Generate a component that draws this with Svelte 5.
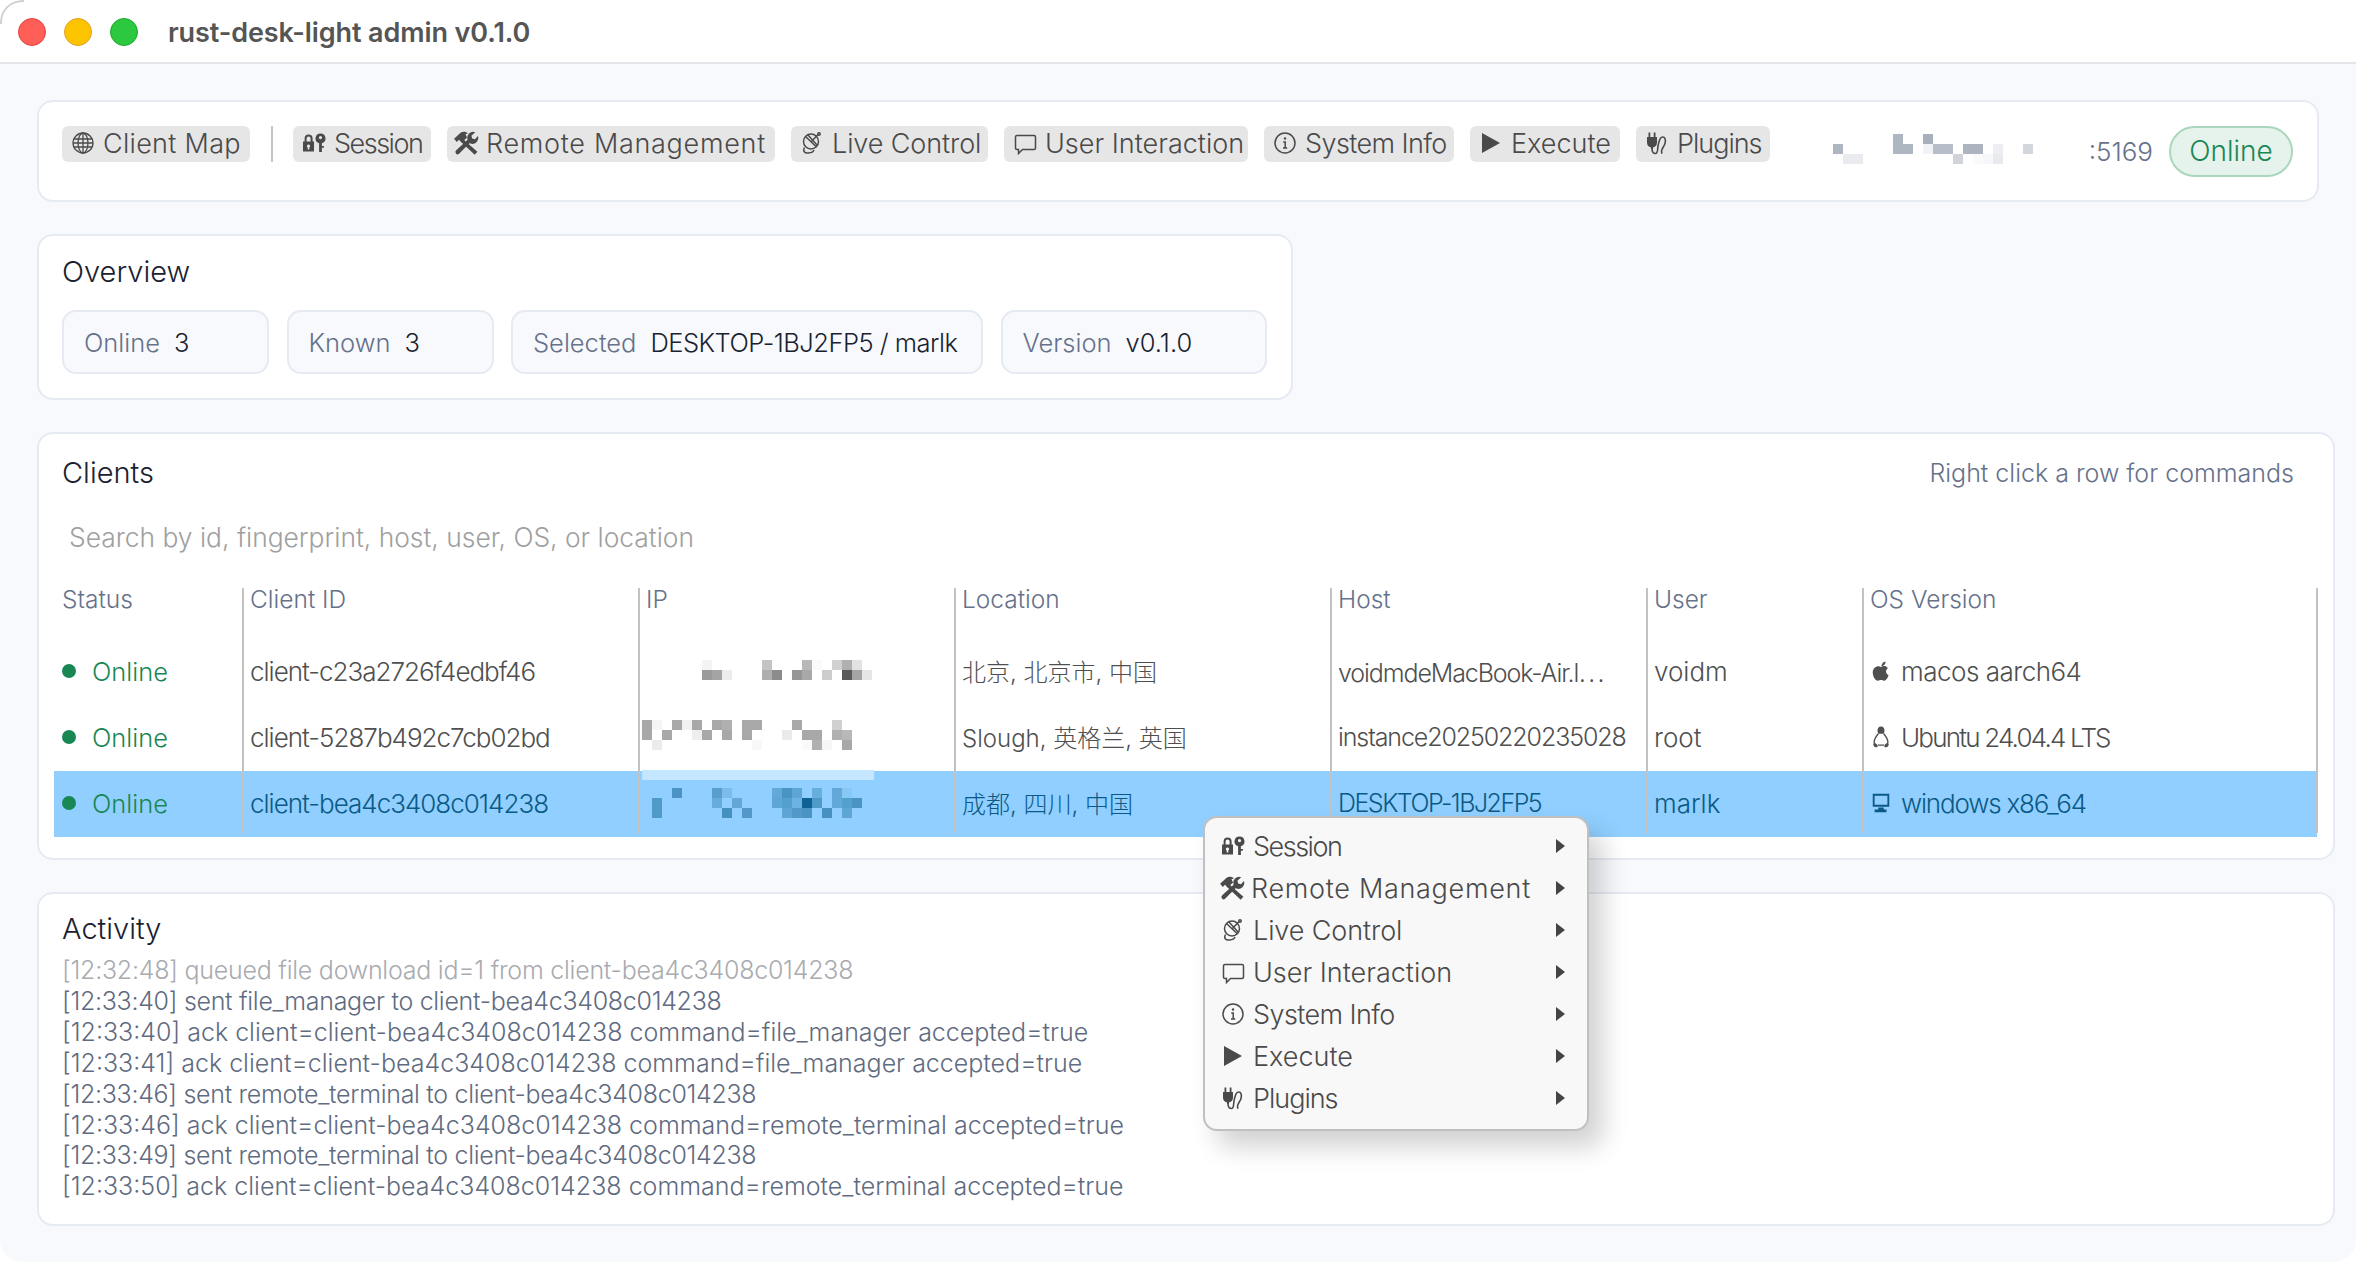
<script>
  const tools = [
    { icon: 'session', label: 'Session' },
    { icon: 'tools', label: 'Remote Management' },
    { icon: 'dish', label: 'Live Control' },
    { icon: 'chat', label: 'User Interaction' },
    { icon: 'info', label: 'System Info' },
    { icon: 'play', label: 'Execute' },
    { icon: 'plug', label: 'Plugins' }
  ];

  const stats = [
    { label: 'Online', value: '3', size: 'sm' },
    { label: 'Known', value: '3', size: 'sm' },
    { label: 'Selected', value: 'DESKTOP-1BJ2FP5 / marlk', size: 'lg' },
    { label: 'Version', value: 'v0.1.0', size: 'md' }
  ];

  const columns = ['Status', 'Client ID', 'IP', 'Location', 'Host', 'User', 'OS Version'];

  // redacted values in the screenshot: [col, y, colour], one block is 10px
  const grey1 = [
    [6, 21, '#f4f4f4'], [12, 21, '#c4c4c4'], [16, 21, '#b8b8b8'], [17, 21, '#fafafa'], [19, 21, '#d0d0d0'], [20, 21, '#b0b0b0'], [21, 21, '#e2e2e2'],
    [6, 31, '#9a9a9a'], [7, 31, '#a4a4a4'], [8, 31, '#ececec'], [12, 31, '#aeaeae'], [13, 31, '#8c8c8c'], [15, 31, '#969696'], [16, 31, '#a8a8a8'], [18, 31, '#cccccc'], [20, 31, '#5a5a5a'], [21, 31, '#a4a4a4'], [22, 31, '#e6e6e6']
  ];
  const grey2 = [
    [0, 15, '#a8a8a8'], [1, 15, '#f4f4f4'], [3, 15, '#a8a8a8'], [4, 15, '#f2f2f2'], [5, 15, '#a8a8a8'], [7, 15, '#a8a8a8'], [8, 15, '#b0b0b0'], [10, 15, '#a8a8a8'], [11, 15, '#a8a8a8'], [15, 15, '#a8a8a8'], [19, 15, '#d0d0d0'],
    [0, 25, '#a8a8a8'], [2, 25, '#a8a8a8'], [5, 25, '#eeeeee'], [6, 25, '#a8a8a8'], [8, 25, '#a8a8a8'], [10, 25, '#a8a8a8'], [14, 25, '#eaeaea'], [16, 25, '#a8a8a8'], [17, 25, '#a8a8a8'], [19, 25, '#b0b0b0'], [20, 25, '#b8b8b8'],
    [1, 35, '#ebebeb'], [11, 35, '#f8f8f8'], [16, 35, '#fafafa'], [17, 35, '#b0b0b0'], [18, 35, '#f6f6f6'], [20, 35, '#a8a8a8']
  ];
  const blue = [
    [3, 19, '#4a93c4'], [7, 19, '#5a9ecd'], [8, 19, '#7cbcea'], [13, 19, '#62a8d8'], [14, 19, '#4a94c4'], [15, 19, '#5ea6d6'], [17, 19, '#68aedd'], [19, 19, '#62a8d8'], [20, 19, '#88c8f4'],
    [1, 29, '#4f9ac8'], [7, 29, '#66acdc'], [9, 29, '#62a8d8'], [13, 29, '#5ea6d6'], [14, 29, '#52a0d0'], [15, 29, '#6cb2e2'], [16, 29, '#0f6394'], [17, 29, '#4f9ac8'], [19, 29, '#62a8d8'], [20, 29, '#52a0d0'], [21, 29, '#4a94c4'],
    [1, 39, '#4f9ac8'], [8, 39, '#4490c0'], [10, 39, '#5298c8'], [14, 39, '#5ea4d4'], [15, 39, '#5298c8'], [16, 39, '#4a94c4'], [18, 39, '#4890c0'], [20, 39, '#5ea6d6']
  ];
  const address = [
    [6, 0, '#aeb6c2'], [9, 0, '#a8b0bc'],
    [0, 10, '#aeb6c2'], [6, 10, '#aeb6c2'], [7, 10, '#aeb6c2'], [9, 10, '#f2f3f6'], [10, 10, '#b8bec9'], [11, 10, '#b8bec9'], [13, 10, '#acb4c0'], [14, 10, '#acb4c0'], [16, 10, '#eceef1'], [19, 10, '#d3d7dd'],
    [1, 20, '#e9ebef'], [2, 20, '#e9ebef'], [12, 20, '#d0d4da'], [14, 20, '#fafafb'], [15, 20, '#f6f7f9'], [16, 20, '#e8eaee']
  ];

  const clients = [
    { id: 'client-c23a2726f4edbf46', ip: grey1, location: '北京, 北京市, 中国', host: 'voidmdeMacBook-Air.l⋯', user: 'voidm', os: 'macos aarch64', osIcon: 'apple' },
    { id: 'client-5287b492c7cb02bd', ip: grey2, location: 'Slough, 英格兰, 英国', host: 'instance20250220235028', user: 'root', os: 'Ubuntu 24.04.4 LTS', osIcon: 'linux' },
    { id: 'client-bea4c3408c014238', ip: blue, location: '成都, 四川, 中国', host: 'DESKTOP-1BJ2FP5', user: 'marlk', os: 'windows x86_64', osIcon: 'monitor', selected: true }
  ];

  const logs = [
    '[12:32:48] queued file download id=1 from client-bea4c3408c014238',
    '[12:33:40] sent file_manager to client-bea4c3408c014238',
    '[12:33:40] ack client=client-bea4c3408c014238 command=file_manager accepted=true',
    '[12:33:41] ack client=client-bea4c3408c014238 command=file_manager accepted=true',
    '[12:33:46] sent remote_terminal to client-bea4c3408c014238',
    '[12:33:46] ack client=client-bea4c3408c014238 command=remote_terminal accepted=true',
    '[12:33:49] sent remote_terminal to client-bea4c3408c014238',
    '[12:33:50] ack client=client-bea4c3408c014238 command=remote_terminal accepted=true'
  ];
</script>

{#snippet icon(name)}
  <svg class="icon" viewBox="0 0 24 24" aria-hidden="true">
    {#if name === 'globe'}
      <g class="line" stroke-width="1.3">
        <circle cx="12" cy="12" r="10" />
        <ellipse cx="12" cy="12" rx="5" ry="10" />
        <path d="M12 2v20M2.8 8h18.4M2 12h20M2.8 16h18.4" />
      </g>
    {:else if name === 'session'}
      <path class="solid" d="M1 10.5h1.6V7.5a4 4 0 0 1 8 0v3h1.4v10H1zM4.6 10.5h4V7.5a2 2 0 0 0-4 0zM6.5 13.5a1.6 1.6 0 0 0-.8 3v2h1.6v-2a1.6 1.6 0 0 0-.8-3z" fill-rule="evenodd" />
      <path class="solid" d="M18.5 2.5a5 5 0 0 1 1.4 9.8V15h2v1.8h-2V21h-2.8v-8.7a5 5 0 0 1 1.4-9.8zM18.5 5a1.6 1.6 0 1 0 0 3.2 1.6 1.6 0 0 0 0-3.2z" fill-rule="evenodd" />
    {:else if name === 'tools'}
      <path class="solid" d="M9 8 22.500 20 20 22.800 7 10.500z" />
      <path class="solid" d="M1 8 7 2.500C9 1 12 1.500 14 3L11.500 4 13 7 8 11.500 5.500 9 3.500 11z" />
      <path class="solid" d="M3 18.800 14 8.500 16.500 11 5.600 22a1.800 1.800 0 0 1-2.600-3.200z" />
      <path class="solid" d="M13.500 9a5.500 5.500 0 0 1 7-7l-3.500 3.200.7 2.600 2.600.7L23 5.500a5.500 5.500 0 0 1-7 7z" />
    {:else if name === 'dish'}
      <g class="line" stroke-width="1.5">
        <circle cx="11" cy="10.5" r="7.5" />
        <path d="M5.5 5.5 16.5 16M11 11l7-7.5M8 4l9 10M4.5 16.5c-2 3.5 0 6 4 5.5 3-.3 5-1.5 5.5-3" />
        <circle cx="19" cy="3" r="1.2" />
      </g>
    {:else if name === 'chat'}
      <path class="line" stroke-width="1.5" d="M4 4.5h17a1.5 1.5 0 0 1 1.5 1.5v11a1.5 1.5 0 0 1-1.5 1.5H9.5L5.5 22.5v-4H4A1.5 1.5 0 0 1 2.500 17V6A1.500 1.500 0 0 1 4 4.500z" />
    {:else if name === 'info'}
      <g class="line" stroke-width="1.5">
        <circle cx="12" cy="12" r="10" />
        <path d="M10.200 11h2v6M10 17h4.200" />
      </g>
      <circle class="solid" cx="12" cy="7.500" r="1.200" />
    {:else if name === 'play'}
      <path class="solid" d="M3 2 21 12 3 22z" />
    {:else if name === 'plug'}
      <path class="solid" d="M3.500 1.500h1.800V6h3.400V1.500h1.800V6H12v5.500a5 5 0 0 1-4 4.900V18H6v-1.600a5 5 0 0 1-4-4.900V6h1.500z" />
      <path class="line" stroke-width="1.600" d="M7 17.500c0 3 1.500 5 3.500 5 3 0 1.500-5 3-10 .8-3 1.500-6.500 4-6.500 2.700 0 3.500 3 2.500 6.500-.8 3-3.500 5-3.500 8 0 1 .3 1.700.8 2" />
    {:else if name === 'apple'}
      <path class="solid" d="M12 7.500c2-1.300 6-1.300 7.500 1.500-3 2-2.500 6 .8 7.500-1 3-3 6-5 6-1.300 0-2-.8-3.300-.8s-2 .8-3.300.8C5.500 22.500 3 17.500 3 13.500 3 9 7.500 5.500 12 7.500zM12.500 6.500c0-2.500 2-4.500 4.500-5 .2 2.500-2 5-4.500 5z" />
    {:else if name === 'linux'}
      <path class="solid" d="M12 .5c-2.700 0-3.800 2-3.800 4.500 0 1.500.4 2.500.8 3.500h6c.4-1 .8-2 .8-3.500C15.800 2.500 14.700.5 12 .5z" />
      <g class="line" stroke-width="1.500">
        <path d="M9 8.500C7 11 4.500 14 4.500 17.500c0 1.200.3 2 .8 2.500M15 8.500c2 2.500 4.500 5.500 4.500 9 0 1.200-.3 2-.8 2.500M8.500 20.800h7" />
      </g>
      <path class="solid" d="M3.500 20c1.500-2 4-1.500 5 2.500-2 1-4.500 1-5-2.500zM20.500 20c-1.500-2-4-1.500-5 2.500 2 1 4.500 1 5-2.500z" />
    {:else if name === 'monitor'}
      <path class="solid" d="M3 2h18v14H3zM5 4v10h14V4zM9 17h6v2h3v3H5v-3h4z" fill-rule="evenodd" />
    {/if}
  </svg>
{/snippet}

{#snippet mosaic(blocks, width)}
  <svg class="mosaic" {width} height="50" viewBox="0 0 {width} 50">
    {#each blocks as [col, y, fill]}
      <rect x={col * 10} {y} width="10" height="10" {fill} />
    {/each}
  </svg>
{/snippet}

<div class="window">
  <header class="titlebar">
    <span class="light red"></span>
    <span class="light yellow"></span>
    <span class="light green"></span>
    <h1>rust-desk-light admin v0.1.0</h1>
  </header>

  <main class="content">
    <section class="card toolbar">
      <button class="tool map">{@render icon('globe')} <span class="label">Client Map</span></button>
      <span class="divider"></span>
      {#each tools as tool}
        <button class="tool {tool.icon}">{@render icon(tool.icon)} <span class="label">{tool.label}</span></button>
      {/each}
      <div class="server">
        {@render mosaic(address, 250)}
        <span class="port">:5169</span>
        <span class="pill">Online</span>
      </div>
    </section>

    <section class="card overview">
      <h2>Overview</h2>
      <div class="stats">
        {#each stats as stat}
          <div class="stat {stat.size}">
            <span class="stat-label">{stat.label}</span>
            <span class="stat-value">{stat.value}</span>
          </div>
        {/each}
      </div>
    </section>

    <section class="card clients">
      <div class="clients-head">
        <h2>Clients</h2>
        <span class="hint">Right click a row for commands</span>
      </div>
      <input class="search" placeholder="Search by id, fingerprint, host, user, OS, or location" />

      <div class="table">
        <div class="row head">
          {#each columns as col}
            <div class="cell">{col}</div>
          {/each}
        </div>
        {#each clients as client}
          <div class="row" class:selected={client.selected}>
            <div class="cell status"><span class="dot"></span>Online</div>
            <div class="cell id">{client.id}</div>
            <div class="cell ip">
              {#if client.selected}<span class="ip-band"></span>{/if}
              <svg class="ip-blocks" width="240" height="66" viewBox="0 0 240 66">
                {#each client.ip as [col, y, fill]}
                  <rect x={col * 10} {y} width="10" height="10" {fill} />
                {/each}
              </svg>
            </div>
            <div class="cell location">{client.location}</div>
            <div class="cell host">{client.host}</div>
            <div class="cell">{client.user}</div>
            <div class="cell os {client.osIcon}">{@render icon(client.osIcon)} {client.os}</div>
          </div>
        {/each}
      </div>
    </section>

    <section class="card activity">
      <h2>Activity</h2>
      <div class="log">
        {#each logs as line, i}
          <div class:faded={i === 0} class:short={!line.includes(' ack ')}>{line}</div>
        {/each}
      </div>
    </section>
  </main>

  <div class="menu">
    {#each tools as tool}
      <div class="menu-item {tool.icon}">
        {@render icon(tool.icon)}
        <span class="label">{tool.label}</span>
        <svg class="arrow" viewBox="0 0 9 14"><path d="M0 0 9 7 0 14z" /></svg>
      </div>
    {/each}
  </div>
</div>

<style>
  :global(body) {
    margin: 0;
    background: #fff;
  }

  .window {
    position: relative;
    width: 2356px;
    height: 1262px;
    overflow: hidden;
    box-sizing: border-box;
    border-radius: 22px;
    background: #f7f9fd;
    font-family: Inter, "Noto Sans CJK SC", sans-serif;
    font-weight: 300;
    font-size: 27px;
    color: #4f4f4f;
  }

  .titlebar {
    position: relative;
    display: flex;
    align-items: center;
    box-sizing: border-box;
    height: 64px;
    padding: 2px 0 0 18px;
    background: #fff;
    border-bottom: 2px solid #e4e5e8;
  }
  /* thin arc of the window edge in the top-left corner */
  .titlebar::before {
    content: "";
    position: absolute;
    top: 0;
    left: 0;
    width: 24px;
    height: 24px;
    border-top: 2px solid #cfcfcf;
    border-left: 2px solid #cfcfcf;
    border-top-left-radius: 22px;
    box-sizing: border-box;
  }

  .light {
    width: 28px;
    height: 28px;
    border-radius: 50%;
    margin-right: 18px;
    box-sizing: border-box;
  }
  .red { background: #ff5f57; border: 1px solid #e0443e; }
  .yellow { background: #fdc500; border: 1px solid #dea123; }
  .green { background: #2bc840; border: 1px solid #1aab29; }

  h1 {
    margin: 0 0 0 12px;
    font-size: 27px;
    font-weight: 600;
    letter-spacing: -0.1px;
    color: #555;
  }

  .content {
    display: flex;
    flex-direction: column;
    align-items: flex-start;
    gap: 32px;
    padding: 36px 21px 0 37px;
  }

  .card {
    box-sizing: border-box;
    background: #fff;
    border: 2px solid #e6eaf2;
    border-radius: 16px;
  }

  h2 {
    margin: 0;
    font-size: 29px;
    font-weight: 300;
    color: #1a2230;
    line-height: 36px;
  }

  .icon {
    flex: none;
    width: 24px;
    height: 24px;
  }
  .solid { fill: currentColor; }
  .line { fill: none; stroke: currentColor; }

  .toolbar {
    display: flex;
    align-items: flex-start;
    gap: 16px;
    width: 2282px;
    height: 102px;
    padding: 24px 24px 0 23px;
  }

  .tool {
    display: flex;
    align-items: center;
    gap: 8px;
    box-sizing: border-box;
    height: 36px;
    padding: 0 0 2px 9px;
    border: 0;
    border-radius: 6px;
    background: #e6e6e6;
    font: inherit;
    color: #4a4a4a;
    white-space: nowrap;
  }
  .tool.map { width: 188px; }
  .tool.session { width: 138px; }
  .tool.tools { width: 328px; padding-left: 6px; gap: 7px; }
  .tool.dish { width: 197px; }
  .tool.chat { width: 244px; }
  .tool.info { width: 190px; }
  .tool.play { width: 150px; }
  .tool.plug { width: 134px; }

  .map .label { letter-spacing: 0.3px; }
  .session .label { letter-spacing: -1.5px; }
  .tools .label { letter-spacing: 0.7px; }
  .dish .label { letter-spacing: -0.1px; }
  .info .label { letter-spacing: -0.6px; }
  .plug .label { letter-spacing: -1px; }
  .tools .icon { width: 26px; height: 26px; }

  .divider {
    width: 2px;
    height: 36px;
    margin: 0 4px 0 5px;
    background: #c4c4c4;
  }

  .server {
    display: flex;
    align-items: center;
    margin-left: auto;
    height: 51px;
  }
  .mosaic { display: block; margin-right: 6px; margin-top: 14px; }
  .port { color: #66718a; margin-right: 16px; font-size: 26px; }

  .pill {
    display: flex;
    align-items: center;
    justify-content: center;
    box-sizing: border-box;
    width: 124px;
    height: 51px;
    padding-bottom: 2px;
    border: 2px solid #a9d6bd;
    border-radius: 26px;
    background: #e6f3ec;
    color: #198754;
    font-size: 28px;
  }

  .overview {
    width: 1256px;
    height: 166px;
    padding: 18px 23px 0;
  }
  .stats {
    display: flex;
    gap: 17.5px;
    margin-top: 20px;
  }
  .stat {
    display: flex;
    align-items: center;
    gap: 14px;
    box-sizing: border-box;
    height: 64px;
    padding: 0 20px;
    background: #f7f9fd;
    border: 2px solid #e6eaf2;
    border-radius: 14px;
    font-size: 25.5px;
    white-space: nowrap;
  }
  .stat.sm { width: 207px; }
  .stat.lg { width: 472px; }
  .stat.md { width: 266px; }
  .stat-label { color: #66718a; }
  .stat-value { color: #1a2230; }
  .lg .stat-value { letter-spacing: -0.5px; }

  .clients {
    width: 2298px;
    height: 428px;
    padding: 21px 16px 0 15px;
  }
  .clients-head {
    display: flex;
    justify-content: space-between;
    align-items: center;
    padding: 0 23px 0 8px;
  }
  .hint { color: #66718a; font-size: 25px; }

  .search {
    display: block;
    box-sizing: border-box;
    width: 100%;
    height: 56px;
    margin-top: 18px;
    padding: 0 15px;
    border: 0;
    outline: 0;
    background: transparent;
    font: inherit;
    font-size: 26.4px;
  }
  .search::placeholder { color: #a0a0a0; opacity: 1; }

  .table { margin-top: 23px; }

  .row {
    display: grid;
    grid-template-columns: 188px 396px 316px 376px 316px 216px 456px;
    height: 66px;
    align-items: start;
    font-size: 26px;
  }
  .row.head {
    height: 51px;
    font-size: 24.5px;
    color: #66718a;
  }
  .cell {
    display: flex;
    align-items: center;
    box-sizing: border-box;
    height: 66px;
    padding: 0 0 2px 6px;
    border-left: 2px solid #c2c2c2;
    white-space: nowrap;
  }
  .cell:first-child {
    border-left: 0;
    padding-left: 8px;
  }
  .cell:last-child { border-right: 2px solid #c2c2c2; }
  .head .cell {
    height: 51px;
    padding-bottom: 0;
    align-items: flex-start;
    line-height: 22px;
  }

  .selected {
    background: #90cfff;
    color: #0b5a85;
  }
  .selected .cell {
    height: 62px;
    padding-top: 2px;
    padding-bottom: 0;
  }

  .status { color: #198754; font-size: 25.5px; }
  .selected .status { color: #198754; }
  .dot {
    flex: none;
    width: 14px;
    height: 14px;
    margin-right: 16px;
    border-radius: 50%;
    background: #198754;
  }

  .id { letter-spacing: -1px; }
  .cell.location { font-size: 24px; padding-bottom: 4px; }
  .selected .cell.location { padding-bottom: 2px; }
  .host { font-size: 25px; letter-spacing: -1.1px; }
  .selected .host { letter-spacing: -1.5px; }

  .cell.ip {
    position: relative;
    padding: 0 0 0 2px;
  }
  .ip-blocks {
    display: block;
    flex: none;
  }
  .ip-band {
    position: absolute;
    top: -1px;
    left: 2px;
    width: 232px;
    height: 10px;
    background: #c5e6ff;
  }

  .os { gap: 9px; }
  .os.apple { letter-spacing: -0.5px; }
  .os.linux { letter-spacing: -1.8px; }
  .os.monitor { letter-spacing: -1.2px; }
  .os .icon { width: 22px; height: 22px; }

  .activity {
    width: 2298px;
    height: 334px;
    padding: 17px 23px 0;
  }
  .log {
    margin-top: 8px;
    font-size: 25px;
    line-height: 30.9px;
    color: #5f6b80;
    white-space: nowrap;
  }
  .log .short { letter-spacing: -0.3px; }
  .log .faded { color: #a9abb0; letter-spacing: -0.25px; }

  .menu {
    position: absolute;
    left: 1203px;
    top: 816px;
    box-sizing: border-box;
    width: 386px;
    height: 315px;
    padding: 8px 0;
    background: #f8f8f8;
    border: 2px solid #c0c0c0;
    border-radius: 14px;
    box-shadow: 14px 16px 26px rgba(0, 0, 0, 0.18);
  }
  .menu-item {
    display: flex;
    align-items: center;
    gap: 8px;
    box-sizing: border-box;
    height: 42px;
    padding: 0 22px 2px 16px;
    color: #4a4a4a;
  }
  .menu-item.tools { padding-left: 14px; gap: 6px; }
  .menu-item .label { flex: 1; white-space: nowrap; }
  .arrow {
    flex: none;
    width: 9px;
    height: 14px;
    fill: #444;
  }
</style>
